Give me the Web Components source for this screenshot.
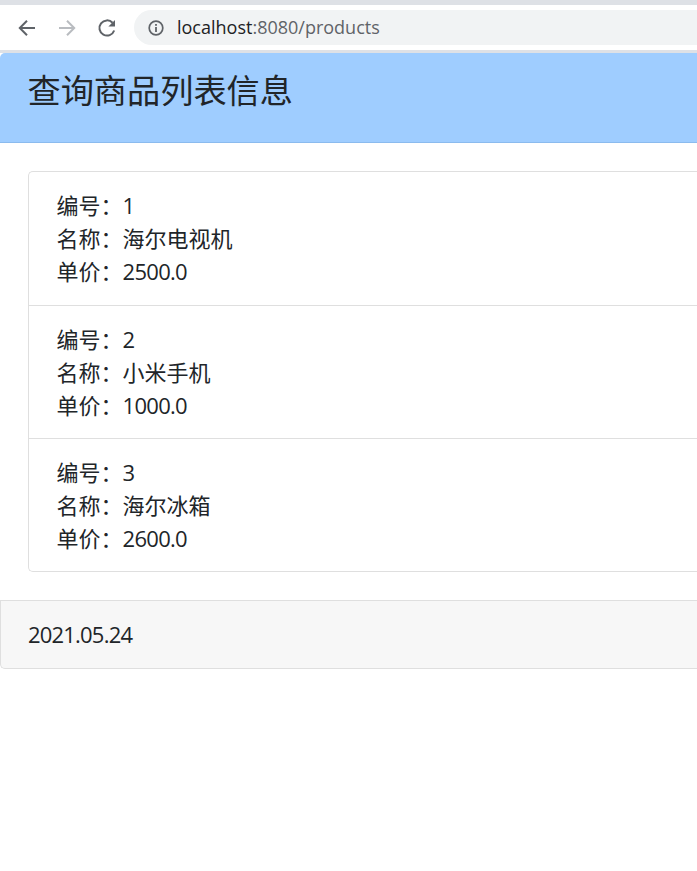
<!DOCTYPE html>
<html lang="zh">
  <head>
    <meta charset="UTF-8" />
    <title>商品列表</title>
    <style>
      html, body { margin: 0; height: 100%; overflow: hidden; background: #fff; }
      body { width: 697px; font-family: "Open Sans", "Noto Sans CJK SC", sans-serif; color: #212529; }
    </style>
  </head>
  <body>
    <browser-bar url-host="localhost" url-rest=":8080/products"></browser-bar>
    <page-card>
      <span slot="title">查询商品列表信息</span>
      <product-list>
        <product-item no="1" name="海尔电视机" price="2500.0"></product-item>
        <product-item no="2" name="小米手机" price="1000.0"></product-item>
        <product-item no="3" name="海尔冰箱" price="2600.0"></product-item>
      </product-list>
      <span slot="footer">2021.05.24</span>
    </page-card>

    <template id="bar-tpl">
      <style>
        :host { display: block; height: 53px; background: #dee1e6; padding-top: 5px; box-sizing: border-box; }
        .tools { height: 45px; background: #fff; display: flex; align-items: center; padding-left: 16px; }
        svg { display: block; flex: none; }
        .nav { width: 22px; height: 22px; margin-right: 18px; }
        .nav:nth-child(3) { margin-right: 16px; }
        .omni { flex: 1; min-width: 0; height: 35px; border-radius: 18px 0 0 18px; background: #f1f3f4; display: flex; align-items: center; padding-left: 13px; font: 18px "Open Sans", sans-serif; color: #5f6368; }
        .omni b { font-weight: 400; color: #202124; }
        .info { width: 18px; height: 18px; margin-right: 12px; }
        .url { margin-top: -2px; }
      </style>
      <div class="tools">
        <svg class="nav" viewBox="0 0 22 22" fill="none" stroke="#5f6368" stroke-width="2"><path d="M19 11H4M11 3.8 3.8 11l7.2 7.2"/></svg>
        <svg class="nav" viewBox="0 0 22 22" fill="none" stroke="#b9bcc0" stroke-width="2"><path d="M3 11h15M11 3.8l7.2 7.2-7.2 7.2"/></svg>
        <svg class="nav" viewBox="0 0 22 22" fill="none" stroke="#5f6368" stroke-width="2"><path d="M18.2 13.5A7.6 7.6 0 1 1 16.6 5.8"/><path d="M19 3v6.6h-6.6z" fill="#5f6368" stroke="none"/></svg>
        <div class="omni">
          <svg class="info" viewBox="0 0 18 18"><circle cx="9" cy="9" r="6.8" fill="none" stroke="#5f6368" stroke-width="1.7"/><rect x="8.1" y="8" width="1.8" height="5" fill="#5f6368"/><rect x="8.1" y="5" width="1.8" height="1.8" fill="#5f6368"/></svg>
          <span class="url"><b id="host"></b><span id="rest"></span></span>
        </div>
      </div>
    </template>

    <template id="card-tpl">
      <style>
        :host { display: block; font-size: 22px; line-height: 33px; }
        header { height: 90px; box-sizing: border-box; padding: 18px 28px 0 27.5px; background: #9fcdff; border-bottom: 1px solid #8bbbee; border-radius: 5px 0 0 0; font-size: 33.2px; line-height: 40px; }
        main { padding: 28px 0 28px 28px; }
        footer { height: 69px; box-sizing: border-box; padding: 17px 28px 0 27px; background: #f7f7f7; border: 1px solid #dfdfdf; border-right: 0; border-radius: 0 0 0 5px; letter-spacing: -0.8px; }
      </style>
      <header><slot name="title"></slot></header>
      <main><slot></slot></main>
      <footer><slot name="footer"></slot></footer>
    </template>

    <template id="list-tpl">
      <style>
        :host { display: block; border: 1px solid #dfdfdf; border-right: 0; border-radius: 5px 0 0 5px; overflow: hidden; }
        ::slotted(product-item:not(:last-child)) { border-bottom: 1px solid #dfdfdf; }
        ::slotted(product-item:first-child) { padding-bottom: 17px; }
      </style>
      <slot></slot>
    </template>

    <template id="item-tpl">
      <style>
        :host { display: block; padding: 17px 28px 16px 27.5px; }
        .row { height: 33px; white-space: nowrap; }
        .num { letter-spacing: -0.7px; }
      </style>
      <div class="row">编号：<span id="no" class="num"></span></div>
      <div class="row">名称：<span id="name"></span></div>
      <div class="row">单价：<span id="price" class="num"></span></div>
    </template>

    <script>
      function shadowFrom(el, id) {
        const shadow = el.attachShadow({ mode: "open" });
        shadow.appendChild(document.getElementById(id).content.cloneNode(true));
        return shadow;
      }

      class BrowserBar extends HTMLElement {
        constructor() {
          super();
          const shadow = shadowFrom(this, "bar-tpl");
          shadow.getElementById("host").textContent = this.getAttribute("url-host");
          shadow.getElementById("rest").textContent = this.getAttribute("url-rest");
        }
      }
      class PageCard extends HTMLElement {
        constructor() {
          super();
          shadowFrom(this, "card-tpl");
        }
      }
      class ProductList extends HTMLElement {
        constructor() {
          super();
          shadowFrom(this, "list-tpl");
        }
      }
      class ProductItem extends HTMLElement {
        constructor() {
          super();
          const shadow = shadowFrom(this, "item-tpl");
          for (const key of ["no", "name", "price"]) {
            shadow.getElementById(key).textContent = this.getAttribute(key);
          }
        }
      }
      customElements.define("browser-bar", BrowserBar);
      customElements.define("page-card", PageCard);
      customElements.define("product-list", ProductList);
      customElements.define("product-item", ProductItem);
    </script>
  </body>
</html>
